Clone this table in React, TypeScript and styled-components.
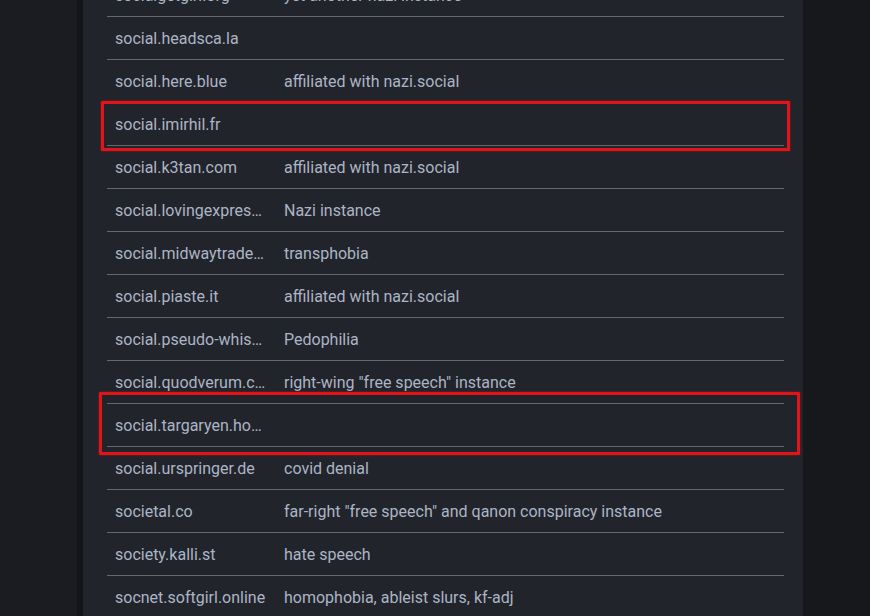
import styled, { createGlobalStyle } from "styled-components";

const GlobalStyle = createGlobalStyle`
  html, body {
    margin: 0;
    padding: 0;
    height: 100%;
    overflow: hidden;
    background: #17181c;
  }
  #root {
    height: 100%;
  }
`;

const Page = styled.div`
  display: flex;
  height: 616px;
  font-family: Roboto, "Liberation Sans", sans-serif;
`;

const LeftGutter = styled.div`
  flex: 0 0 77px;
  background: #1b1c21;
`;

const Divider = styled.div`
  flex: 0 0 6px;
  background: #141519;
`;

const Panel = styled.div`
  position: relative;
  flex: 0 0 720px;
  background: #22242b;
  overflow: hidden;
  padding-left: 24px;
  box-sizing: border-box;
`;

const RightGutter = styled.div`
  flex: 1;
  background: #17181c;
`;

const Table = styled.table`
  width: 677px;
  margin-top: -26px;
  border-collapse: collapse;
  table-layout: fixed;
`;

const Cell = styled.td<{ $name?: boolean }>`
  height: 42px;
  padding: ${(p) => (p.$name ? "0 10px 0 8px" : "0 8px")};
  border-bottom: 1px solid #66666b;
  color: #abb5c5;
  font-size: 16px;
  white-space: nowrap;
  overflow: hidden;
  text-overflow: ellipsis;
  vertical-align: middle;
  width: ${(p) => (p.$name ? "151px" : "auto")};
`;

const Highlight = styled.div<{ $x: number; $y: number; $w: number; $h: number }>`
  position: absolute;
  left: ${(p) => p.$x}px;
  top: ${(p) => p.$y}px;
  width: ${(p) => p.$w}px;
  height: ${(p) => p.$h}px;
  box-sizing: border-box;
  border: 3px solid #e3131a;
  border-radius: 1px;
  box-shadow: 0 0 2px rgba(227, 19, 26, 0.7);
  pointer-events: none;
`;

const rows: [string, string][] = [
  ["socialgetgirl.org", "yet another nazi instance"],
  ["social.headsca.la", ""],
  ["social.here.blue", "affiliated with nazi.social"],
  ["social.imirhil.fr", ""],
  ["social.k3tan.com", "affiliated with nazi.social"],
  ["social.lovingexpressions.net", "Nazi instance"],
  ["social.midwaytrades.com", "transphobia"],
  ["social.piaste.it", "affiliated with nazi.social"],
  ["social.pseudo-whistleblower.com", "Pedophilia"],
  ["social.quodverum.com", 'right-wing "free speech" instance'],
  ["social.targaryen.house", ""],
  ["social.urspringer.de", "covid denial"],
  ["societal.co", 'far-right "free speech" and qanon conspiracy instance'],
  ["society.kalli.st", "hate speech"],
  ["socnet.softgirl.online", "homophobia, ableist slurs, kf-adj"],
];

export default function App() {
  return (
    <>
      <GlobalStyle />
      <Page>
        <LeftGutter />
        <Divider />
        <Panel>
          <Table>
            <tbody>
              {rows.map(([domain, reason]) => (
                <tr key={domain}>
                  <Cell $name>{domain}</Cell>
                  <Cell>{reason}</Cell>
                </tr>
              ))}
            </tbody>
          </Table>
          <Highlight $x={18} $y={101} $w={689} $h={50} />
          <Highlight $x={16} $y={392} $w={701} $h={63} />
        </Panel>
        <RightGutter />
      </Page>
    </>
  );
}
